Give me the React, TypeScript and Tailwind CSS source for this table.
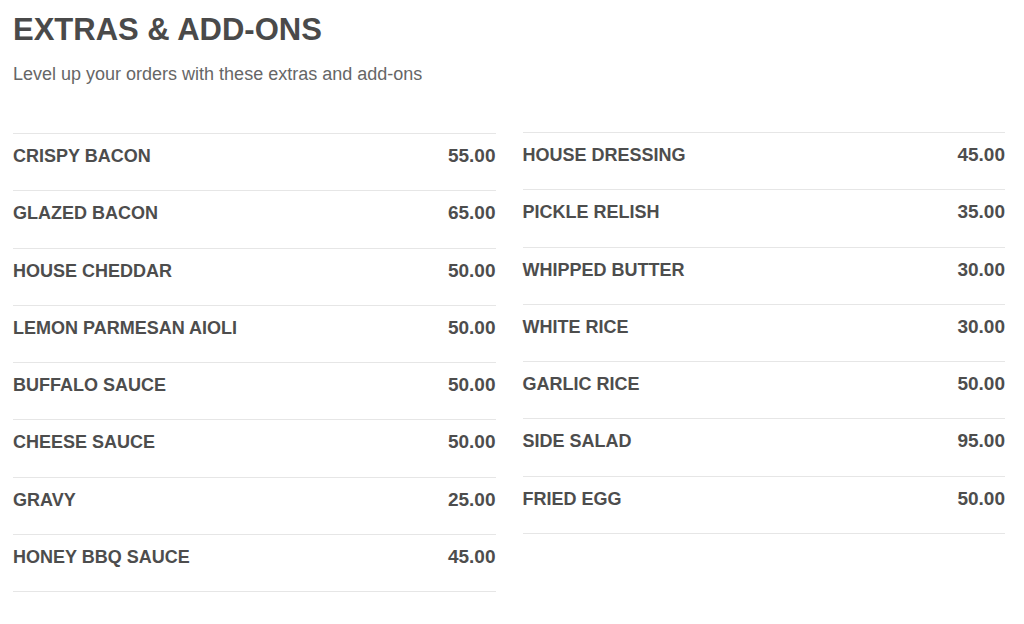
import React from "react";

const left: [string, string][] = [
  ["CRISPY BACON", "55.00"],
  ["GLAZED BACON", "65.00"],
  ["HOUSE CHEDDAR", "50.00"],
  ["LEMON PARMESAN AIOLI", "50.00"],
  ["BUFFALO SAUCE", "50.00"],
  ["CHEESE SAUCE", "50.00"],
  ["GRAVY", "25.00"],
  ["HONEY BBQ SAUCE", "45.00"],
];

const right: [string, string][] = [
  ["HOUSE DRESSING", "45.00"],
  ["PICKLE RELISH", "35.00"],
  ["WHIPPED BUTTER", "30.00"],
  ["WHITE RICE", "30.00"],
  ["GARLIC RICE", "50.00"],
  ["SIDE SALAD", "95.00"],
  ["FRIED EGG", "50.00"],
];

function Column({ items, className = "" }: { items: [string, string][]; className?: string }) {
  return (
    <div className={"flex flex-col border-b border-[#e6e6e6] " + className}>
      {items.map(([name, price]) => (
        <div
          key={name}
          className="flex h-[57.25px] items-start justify-between border-t border-[#e6e6e6] pt-[12px]"
        >
          <span className="text-[18px] font-bold leading-[20px] text-[#4d4d4d]">{name}</span>
          <span className="text-[19px] font-bold leading-[20px] text-[#4d4d4d]">{price}</span>
        </div>
      ))}
    </div>
  );
}

export default function App() {
  return (
    <div
      className="h-[624px] w-[1024px] overflow-hidden bg-white pl-[13px]"
      style={{ fontFamily: '"Liberation Sans", Arial, sans-serif' }}
    >
      <div className="w-[992px]">
        <h1 className="pt-[12px] text-[31px] font-bold leading-[36px] text-[#4a4a4a]">EXTRAS &amp; ADD-ONS</h1>
        <p className="mt-[15px] text-[18px] leading-[22px] text-[#666666]">
          Level up your orders with these extras and add-ons
        </p>
        <div className="mt-[48px] grid grid-cols-2 items-start gap-[27px]">
          <Column items={left} />
          <Column items={right} className="-mt-px" />
        </div>
      </div>
    </div>
  );
}
